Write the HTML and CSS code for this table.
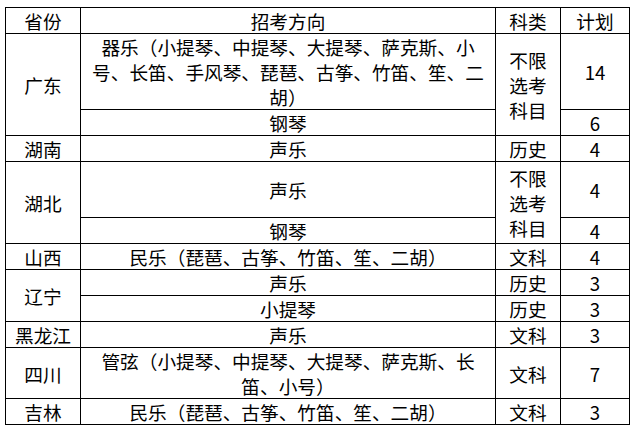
FILE: index.html
```html
<!DOCTYPE html>
<html lang="zh-CN">
<head>
<meta charset="utf-8">
<title>招考计划</title>
<link rel="stylesheet" href="styles.css">
</head>
<body>
<table class="plan">
  <colgroup>
    <col class="c-prov">
    <col class="c-dir">
    <col class="c-type">
    <col class="c-num">
  </colgroup>
  <tr class="h26"><th>省份</th><th>招考方向</th><th>科类</th><th>计划</th></tr>
  <tr class="h76"><td rowspan="2">广东</td><td>器乐（小提琴、中提琴、大提琴、萨克斯、小号、长笛、手风琴、琵琶、古筝、竹笛、笙、二胡）</td><td rowspan="2">不限选考科目</td><td>14</td></tr>
  <tr class="h26"><td>钢琴</td><td>6</td></tr>
  <tr class="h26"><td>湖南</td><td>声乐</td><td>历史</td><td>4</td></tr>
  <tr class="h56"><td rowspan="2">湖北</td><td>声乐</td><td rowspan="2">不限选考科目</td><td>4</td></tr>
  <tr class="h26"><td>钢琴</td><td>4</td></tr>
  <tr class="h26"><td>山西</td><td>民乐（琵琶、古筝、竹笛、笙、二胡）</td><td>文科</td><td>4</td></tr>
  <tr class="h26"><td rowspan="2">辽宁</td><td>声乐</td><td>历史</td><td>3</td></tr>
  <tr class="h26"><td>小提琴</td><td>历史</td><td>3</td></tr>
  <tr class="h26"><td>黑龙江</td><td>声乐</td><td>文科</td><td>3</td></tr>
  <tr class="h50"><td>四川</td><td>管弦（小提琴、中提琴、大提琴、萨克斯、长笛、小号）</td><td>文科</td><td>7</td></tr>
  <tr class="h26"><td>吉林</td><td>民乐（琵琶、古筝、竹笛、笙、二胡）</td><td>文科</td><td>3</td></tr>
</table>
</body>
</html>
```
FILE: styles.css
```css
html, body {
  margin: 0;
  padding: 0;
  background: #fff;
}
body {
  padding: 7px 0 0 5px;
  font-family: "Noto Sans CJK SC", "Noto Sans", sans-serif;
  color: #000;
}
.plan {
  border-collapse: collapse;
  table-layout: fixed;
  width: 624px;
  font-size: 18.67px;
  line-height: 25px;
}
.c-prov { width: 75px; }
.c-dir { width: 415px; }
.c-type { width: 65px; }
.c-num { width: 69px; }
.plan th,
.plan td {
  border: 1px solid #000;
  padding: 0 6px;
  text-align: center;
  vertical-align: middle;
  font-weight: normal;
}
.h26 { height: 26px; }
.h50 { height: 50px; }
.h56 { height: 56px; }
.h76 { height: 76px; }
```
